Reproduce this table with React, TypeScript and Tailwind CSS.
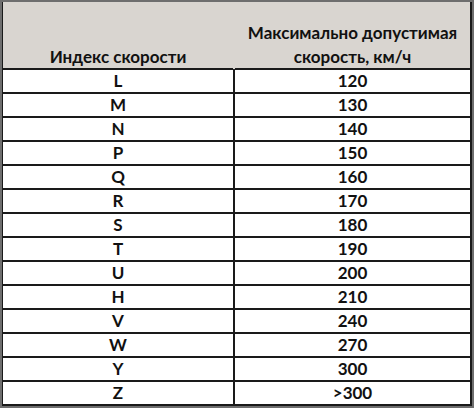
const rows: [string, string][] = [
  ["L", "120"],
  ["M", "130"],
  ["N", "140"],
  ["P", "150"],
  ["Q", "160"],
  ["R", "170"],
  ["S", "180"],
  ["T", "190"],
  ["U", "200"],
  ["H", "210"],
  ["V", "240"],
  ["W", "270"],
  ["Y", "300"],
  ["Z", ">300"],
];

export default function App() {
  return (
    <div
      className="h-[408px] w-[474px] bg-[#6e6e6e] px-[2px] pt-[2px] pb-[2px] text-[#111]"
      style={{ fontFamily: "Lato, 'Open Sans', 'Noto Sans', sans-serif" }}
    >
      <div className="flex h-full flex-col border-r-2 border-l border-[#1a1a1a] bg-white">
        <div className="grid h-[68px] grid-cols-[232px_1fr] border-b-2 border-[#1a1a1a] bg-[#d9d5d0] text-[17px] font-bold">
          <div className="border-r-2 border-[#d9d5d0] pt-[43px] text-center leading-[24px]">
            Индекс скорости
          </div>
          <div className="flex flex-col items-center pt-[19px] leading-[24px]">
            <span>Максимально допустимая</span>
            <span>скорость, км/ч</span>
          </div>
        </div>
        {rows.map(([code, speed]) => (
          <div
            key={code}
            className="grid h-[24px] grid-cols-[232px_1fr] border-b-2 border-[#1a1a1a] text-[17px] font-bold leading-[22px]"
          >
            <div className="border-r-2 border-[#1a1a1a] text-center">{code}</div>
            <div className="text-center">{speed}</div>
          </div>
        ))}
      </div>
    </div>
  );
}
